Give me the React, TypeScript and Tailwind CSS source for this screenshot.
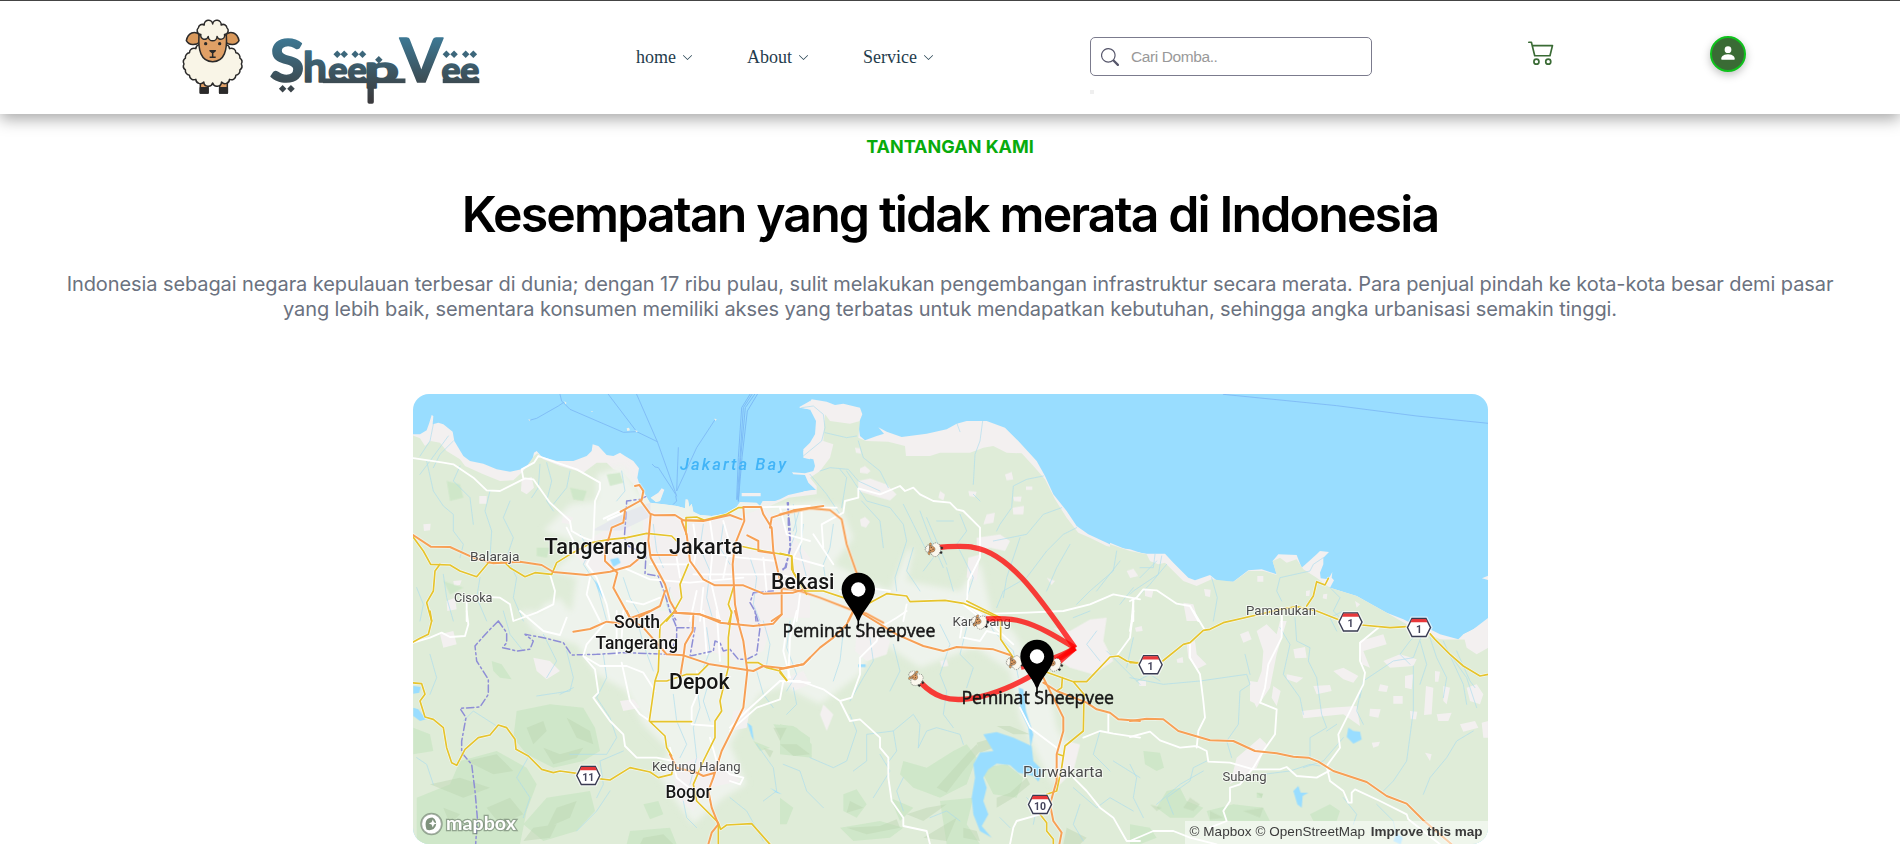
import React from "react";
import { BsSearch, BsCart2, BsPersonFill, BsChevronDown } from "react-icons/bs";

/** Closed outline made of small arcs around an ellipse. */
function cloud(cx: number, cy: number, rx: number, ry: number, n: number): string {
  let d = "";
  for (let i = 0; i <= n; i++) {
    const a = (i / n) * Math.PI * 2 - Math.PI / 2;
    const x = (cx + rx * Math.cos(a)).toFixed(1);
    const y = (cy + ry * Math.sin(a)).toFixed(1);
    const r = ((rx + ry) * 1.9) / n;
    d += i === 0 ? `M${x},${y}` : `A${r.toFixed(1)},${r.toFixed(1)} 0 0 1 ${x},${y}`;
  }
  return d + "Z";
}

const BODY = cloud(158, 192, 86, 57, 20);
const HAIR = cloud(158, 91, 47, 19, 11);

function SheepShape() {
  return (
    <g stroke="#2b2a2a" strokeWidth="4.5" strokeLinejoin="round">
      <path d="M121,240V279H144V240ZM179,240V279H202V240Z" fill="#e0a066" />
      <path d="M121,263H144V279H121ZM179,263H202V279H179Z" fill="#2b2a2a" />
      <path d={BODY} fill="#f9f5e7" />
      <path d="M118,103C104,92 84,97 79,122C88,138 108,136 120,126Z" fill="#d9995c" />
      <path d="M198,103C212,92 232,97 237,122C228,138 208,136 196,126Z" fill="#d9995c" />
      <path d="M117,105C114,150 122,184 158,185C194,184 202,150 199,105Z" fill="#e0a066" />
      <path d={HAIR} fill="#f9f5e7" />
      <g fill="#2b2a2a" stroke="none">
        <circle cx="137" cy="131" r="5" />
        <circle cx="179" cy="131" r="5" />
      </g>
      <path d="M150,152H166L158,159ZM158,158V170M149,172H167" fill="#2b2a2a" />
    </g>
  );
}

/** Small head-on version used for the moving markers. */
function SheepMarker() {
  return (
    <g stroke="#2b2a2a" strokeWidth="5" strokeLinejoin="round">
      <path d="M121,240V279H144V240ZM179,240V279H202V240Z" fill="#2b2a2a" />
      <path d={BODY} fill="#fbf8ee" strokeDasharray="16 10" />
      <path d={HAIR} fill="#fbf8ee" strokeDasharray="16 10" />
      <path d="M118,108C104,97 86,100 80,122C88,136 108,134 120,128Z" fill="#d9995c" strokeWidth="3" />
      <path d="M198,108C212,97 230,100 236,122C228,136 208,134 196,128Z" fill="#d9995c" strokeWidth="3" />
      <path d="M119,112C116,150 126,184 158,185C190,184 200,150 197,112Z" fill="#dd9c62" strokeWidth="4" />
      <circle cx="140" cy="134" r="7" fill="#2b2a2a" stroke="none" />
      <circle cx="178" cy="134" r="7" fill="#2b2a2a" stroke="none" />
      <path d="M148,160H168" fill="none" strokeWidth="9" />
    </g>
  );
}

function Diamond({ x, y }: { x: number; y: number }) {
  return <rect x={x - 8} y={y - 8} width="16" height="16" transform={`rotate(45 ${x} ${y})`} />;
}

function Wordmark() {
  return (
    <svg viewBox="322 90 646 230" className="h-[77px] w-[215px] shrink-0" aria-label="SheepVee">
      <defs>
        <linearGradient id="ink" gradientUnits="userSpaceOnUse" x1="0" y1="112" x2="0" y2="300">
          <stop offset="0" stopColor="#3d7894" />
          <stop offset="0.65" stopColor="#3c4f58" />
          <stop offset="1" stopColor="#3b3b3e" />
        </linearGradient>
      </defs>
      <g fill="url(#ink)" stroke="url(#ink)" strokeLinejoin="round" fontFamily="Lato, 'Liberation Sans', sans-serif" fontWeight="700">
        <text y="246" strokeWidth="5">
          <tspan x="330" fontSize="180" textLength="104" lengthAdjust="spacingAndGlyphs">S</tspan>
          <tspan x="430" fontSize="128" textLength="72" lengthAdjust="spacingAndGlyphs">h</tspan>
          <tspan x="506" fontSize="104" textLength="116" lengthAdjust="spacingAndGlyphs">ee</tspan>
          <tspan x="614" fontSize="106" textLength="104" lengthAdjust="spacingAndGlyphs">p</tspan>
          <tspan x="722" fontSize="184" textLength="128" lengthAdjust="spacingAndGlyphs">V</tspan>
          <tspan x="846" fontSize="104" textLength="114" lengthAdjust="spacingAndGlyphs">ee</tspan>
        </text>
      </g>
      <g fill="url(#ink)">
        <rect x="490" y="235" width="248" height="14" />
        <rect x="850" y="235" width="110" height="14" />
        <rect x="624" y="236" width="19" height="75" rx="5" />
        {[533, 554, 587, 609, 861, 884, 919, 942].map((x) => (
          <Diamond key={x} x={x} y={162} />
        ))}
        <Diamond x={658} y={179} />
        <Diamond x={369} y={266} />
        <Diamond x={394} y={266} />
      </g>
    </svg>
  );
}

/** Map tiles: every tile uses its own thirds-of-a-pixel coordinates. */
type TileKey = "A" | "B" | "C" | "D" | "E" | "F";
type Tiles = Partial<Record<TileKey, string>>;
const ORIGIN: Record<TileKey, [number, number]> = {
  A: [410, 390], B: [410, 610], C: [780, 390], D: [780, 610], E: [1130, 390], F: [1130, 610],
};

function Layer({ tiles, ...rest }: { tiles: Tiles } & React.SVGProps<SVGGElement>) {
  return (
    <g strokeLinejoin="round" strokeLinecap="round" {...rest}>
      {(Object.keys(tiles) as TileKey[]).map((k) => (
        <path key={k} d={tiles[k]} transform={`translate(${ORIGIN[k][0]} ${ORIGIN[k][1]}) scale(0.33333)`} />
      ))}
    </g>
  );
}

const COAST: Tiles = {
  A: "M0,130L30,130L50,118L58,95L65,72L70,75L68,100L85,95L100,100L128,122L133,150L160,195L180,210L220,218L260,235L300,242L335,235L365,215L372,185L380,180L395,197L440,210L490,210L530,195L545,180L548,160L565,165L590,192L610,195L630,185L645,195L670,210L687,232L682,260L690,285L705,310L720,335L760,340L800,345L825,352L827,325L834,326L838,348L845,338L850,362L870,372L905,375L945,368L980,348L990,333L1040,335L1050,345L1058,330L1100,330L1150,315L1185,300L1240,297V760H0ZM722,320L745,305L755,292L763,296L750,330L738,333ZM995,306H1052V316H995ZM1200,30L1168,48L1200,56ZM1200,165L1180,180V200L1200,205Z",
  C: "M-30,335L0,325L25,312L55,305L95,297L108,297L85,275L75,252L40,250L36,244L75,247L100,240L105,225L100,205L72,200L70,175L90,155L105,130L108,90L90,55L57,50L85,38L95,25L140,32L165,42L190,38L240,50L247,70L235,100L240,135L255,148L290,135L312,128L295,109L320,122L365,138L440,128L500,115L530,98L560,90L620,90L675,110L715,150L770,210L795,255L820,310L860,360L890,405L925,430L980,455L1010,470L1050,475L1090,488V760H-30Z",
  E: "M-60,455L0,480L50,488L105,488L130,515L175,560L195,568L240,552L265,572L310,572L355,538L395,535L440,550L428,510L445,490L500,492L515,530L560,490L570,480L597,483L580,500L580,520L570,545L572,562L595,565L607,543L605,560L612,568L600,590L680,615L770,665L820,685L860,705L900,715L930,730L985,745L1000,730L1030,715L1075,680L1110,680V780H-60ZM1056,562L1075,554V567Z",
};

const GREEN: Tiles = {
  A: "M0,130L30,142L45,165L62,150L90,155L110,180L150,205L165,225L220,250L270,270L310,268L340,240L372,195L382,187L400,205L450,225L520,245L560,215L590,215L610,235L640,245L680,290L700,340L760,360L820,400L1000,400L1100,340L1240,310V780H0Z",
  C: "M-30,345L25,320L110,310L110,285L90,260L120,240L150,200L160,160L130,150L135,70L150,90L210,98L240,90L235,140L258,150L325,152L375,165L378,195H450L480,185L570,185L610,170L640,165L680,185L725,187L765,230L795,265L825,325L860,380L895,425L930,440L980,465L1090,492V780H-30Z",
  E: "M-60,460L0,480L50,490L60,510L105,515L160,570L200,585L245,565L310,572L355,540L400,540L440,552L428,510L450,500L470,515L500,505L520,535L560,560L600,590L680,615L770,665L830,700L930,745L985,755L1040,740L1110,690V780H-60Z",
};

const URBAN: Tiles = {
  A: "M560,250L640,225L690,310L1100,345L1240,330V690H600L480,690L500,560L430,540L520,460L400,420L480,340L560,330ZM400,640L450,620L500,690H380Z",
  B: "M330,0H1200V200L1050,250L1000,330L960,400L1010,520L940,560L850,640L790,560L740,480L780,420L700,340L650,240L560,190L500,100L380,70Z",
  C: "M0,340L180,345L220,440L160,520L330,600L380,480L400,470L380,570L540,600L600,510L640,690H0Z",
  D: "M0,0H600L640,60L580,110L420,170L300,90L240,190L120,280L0,220ZM600,0L700,60L770,190L810,240L830,350L870,420L820,520L790,470L720,320L690,180L560,90Z",
};

const CORE: Tiles = {
  A: "M700,350L830,390L980,380L1060,350L1120,400L1200,500V680H820L760,560L700,480ZM480,480L580,420L660,400L690,520L560,550ZM335,265L365,258L372,290L350,310L333,300ZM208,315H230V338H208ZM40,400L62,398L60,418L42,420ZM110,630L135,620L140,655L112,660ZM460,370L490,380L480,400L455,395ZM130,570L155,568L150,582L132,585Z",
  B: "M700,0H1100L1060,120L980,150L900,120L760,140ZM90,70L130,60L140,100L100,110ZM370,140L420,150L450,180L410,205L380,180ZM630,270L670,265L690,290L640,300ZM790,470L860,440L950,470L990,510L900,530L850,600L800,560ZM970,300L1020,290L1010,350L960,360Z",
  C: "M240,232L255,225L272,240L262,248L240,245ZM235,270L270,262L320,280L350,310L330,328L300,320L235,300ZM225,170L240,172L243,188L228,185ZM240,385L255,378L270,392L258,410L243,405ZM565,300L590,302L585,318L568,315ZM675,250L695,243L700,265L680,268ZM738,286H757V297H738ZM700,318L725,316L722,332L702,330ZM698,350L732,345L730,370H700ZM620,370L645,365L640,395L610,400ZM590,440L660,430L690,450L675,480L630,470L590,480ZM565,500L600,490L590,570L560,560ZM1040,540L1060,533L1075,555L1050,560ZM800,560L825,570L815,582ZM480,300L495,310L490,328L475,320Z",
  D: "M230,60L280,50L330,90L320,130L260,150L225,120ZM820,50L870,60L930,25L980,20L970,90L1000,150L940,190L870,170L840,150L890,110ZM860,390L900,400L880,480L840,520L825,480ZM20,200L70,180L90,220L40,240ZM130,280L160,310L140,360L120,310ZM480,150L500,145L505,165L485,168Z",
  E: "M0,540L20,555L0,560ZM45,592L70,600L65,620L45,615ZM222,594L242,596L240,618L226,615ZM382,555H400V572H382ZM160,635L190,640L205,690H170ZM528,600L540,598L538,615H528ZM580,610L592,608L590,625L578,622ZM675,630L690,640L680,650ZM60,510L90,488L105,515L85,520Z",
  F: "M170,100L195,90L200,130L230,160L200,175L175,140ZM380,60L410,40L440,70L450,30L470,30L440,130L420,230L380,290L365,260L395,180L400,120ZM430,225L452,240L440,285L425,260ZM470,190L520,200L500,215L470,205ZM550,225L600,222L605,240L560,250ZM490,115L525,108L530,140L495,142ZM515,300L600,290L680,285L690,345L640,310L520,322ZM610,180L640,170L685,195L670,215L640,205ZM690,90L760,70L770,100L700,120L720,170L695,160ZM760,150L810,130L860,145L850,165L780,170ZM750,220L775,225L770,243L745,240ZM790,255H818V278H790ZM825,195L850,190L845,235L825,230ZM888,225L910,230L905,310L882,312ZM840,300L862,302L858,325H842ZM915,180L930,182L925,212H915ZM720,293L752,295L745,320L718,315ZM920,310L965,305L955,330L925,330ZM990,340L1035,330L1045,350L1000,362ZM725,395L750,392L745,405L730,410ZM885,425L905,430L900,450ZM1010,230L1040,220L1060,250L1050,280L1020,270ZM1000,70L1075,30V110L1040,130L1010,110ZM140,145L158,138L160,155L142,155ZM25,210H48V225H28ZM15,50L35,45L38,60L18,62ZM330,70L355,60L365,85L340,95ZM320,440L390,380L410,400L380,470L300,520ZM360,210L395,215L380,280L360,270ZM940,225L960,230L950,280L940,270ZM1055,335L1075,330V380L1060,380Z",
};

const WOODS: Tiles = {
  A: "M110,270L150,280L160,320L120,330ZM590,250L630,245L640,275L600,285ZM480,290L530,300L520,330L490,325ZM380,470L420,470L410,500L380,495ZM100,570L160,590L120,610Z",
  B: "M245,150L275,160L305,205L270,200L250,180ZM10,350L60,370L70,420L10,430ZM320,300L420,280L520,290L555,350L570,420L520,450L430,470L350,430L310,380ZM150,450L260,420L350,470L380,520L350,600L330,700H20V560L120,520ZM410,560L540,540L555,600L500,660L400,690L340,640ZM700,580L745,570L760,610L720,625ZM1090,340L1150,345L1200,380V420L1130,410ZM1030,390L1080,410L1050,420ZM660,660L780,650L800,700H650Z",
  D: "M0,340L50,350L95,400V440L0,430ZM370,450L440,470L520,420L560,400L590,440L560,520L480,560L400,530L360,490ZM190,550L230,535L260,580L230,620L190,600ZM600,470L680,460L730,500L710,560L640,550L620,510ZM330,560L400,590L360,630ZM480,570L580,560L560,640L600,700H500ZM0,560L40,590L20,640L0,640ZM180,650L300,630L370,650L330,680L220,690Z",
  F: "M40,420L90,425L102,470L80,480L45,460ZM110,540L150,530L170,570L220,590L190,620H120L80,590ZM230,600L310,580L400,590L420,630H240ZM540,610L600,580L630,600L620,630H550ZM380,545L400,548L395,562L380,560ZM0,640L60,650L80,680L30,700H0Z",
};

const RELIEF: Tiles = {
  B: "M350,350L400,330L410,360L370,400ZM470,320L540,360L550,400L500,380ZM400,410L450,430L520,410L500,440L430,460ZM170,450L260,430L310,480L250,490ZM60,520L150,500L240,530L160,560ZM230,590L300,560L340,610L270,640ZM440,590L500,570L480,620L410,650ZM370,650L440,640L420,680L340,690ZM700,680L760,670L790,700H690ZM100,590L150,610L120,640ZM1090,350L1130,350L1110,390ZM1060,410L1090,420L1080,440Z",
  D: "M470,530L560,430L590,400L600,420L550,480L500,545ZM590,395L625,385L640,410L600,425ZM650,345L690,345L750,370L700,370ZM210,570L250,590L200,605ZM650,560L690,545L740,500L750,520L700,560L650,590ZM380,610L440,590L500,580L430,630ZM200,650L300,645L350,625L360,650L260,670ZM430,680L530,620L500,690ZM0,400L50,400L90,430L40,435ZM860,650L920,680L900,700H850ZM550,650L590,660L600,690L550,680Z",
  F: "M180,560L210,580L190,600L160,590ZM340,600L400,590L390,620ZM380,545L398,548L395,560ZM60,580L95,590L80,600ZM240,600L280,620L240,625Z",
};

const WATER: Tiles = {
  A: "M600,505L625,500L632,515L610,528ZM553,565L570,585L580,625L562,590Z",
  B: "M10,225L32,228L28,245L10,248ZM10,290L25,295L48,325L30,330L10,315ZM1012,335L1025,345L1032,390L1024,375ZM1080,530L1115,550L1100,545Z",
  D: "M610,370L650,363L700,380L755,405L760,450L790,480L775,512L760,495L715,485L690,462L650,458L625,475L610,500L620,530L610,570L625,610L605,645L635,680L600,660L580,610L575,560L585,500L580,460L600,425L640,420ZM716,230L730,235L738,300L760,370L752,410L745,350L722,300ZM235,160H257V168H235Z",
  F: "M655,350L670,360L690,362L695,385L670,398L650,378ZM490,540L505,525L512,545L535,545L518,555L515,590L502,580ZM790,690L800,665L818,680L812,700Z",
};

const RIVERS: Tiles = {
  A: "M70,100L60,150L30,195M115,135L60,210L30,250M130,150L90,190L70,230M50,210L70,300L100,345L130,370L130,420L160,460L150,500M150,225L130,270L180,320L190,400M240,300L225,360L245,420L240,500M410,215L425,270L410,330L430,360M480,240L470,290L430,340M390,220L385,290L365,320M635,240L645,300L620,330M300,330L280,380L310,440L290,500L320,560L310,620L340,690M510,430L540,480L520,520L560,580L590,690M730,400L740,480L760,530M880,400L870,470L900,540L890,620L910,690M940,400L930,470L960,520M1020,500L1040,560L1030,640L1050,690M1150,340L1160,420L1140,470M100,550L110,620L130,690M210,560L200,620L230,690M640,560L660,620L700,690M780,590L770,640L790,690M20,590L40,640L30,690M1180,400L1170,480L1190,560",
  B: "M280,0L300,70L340,120M400,70L440,150L410,200M470,120L490,200L480,240L380,255M490,230L450,250M60,130L80,200L60,250M160,330L190,300L260,345M360,430L320,500L360,560L340,620M580,130L590,200L560,260L600,320L620,380L590,430L480,430M640,420L570,450L580,520L560,560M790,250L800,330L830,400L810,440M860,220L870,290L850,350L860,440L840,520M1040,180L1060,250L1090,290M1040,400L1090,470L1100,540L1060,570M820,570L830,620L860,650M900,200L880,270L900,330M1150,230L1160,280L1130,310M20,440L50,460L70,520M600,540L560,600L500,660M960,560L1010,600L1060,690M680,20L700,100L730,180M890,50L900,120L880,170M1060,30L1080,100L1070,160",
  C: "M65,50L100,45L130,70L135,110L125,150L70,195M135,125L200,140L230,135M235,150L250,200L300,240L325,290M120,240L150,230L205,235L235,270L300,300M180,235L200,260L185,350M200,240L260,330L330,350L370,400L380,450L345,560L350,600M245,330L300,390L310,470M370,340L400,400L440,480M440,380L470,450L500,520M420,360L450,440L490,530M470,390H520M530,95L540,122M608,90L600,150L585,190L580,280M580,310L600,330M790,255L740,265L700,285L695,350L660,400L650,420M845,350L790,370L740,430L640,450M890,410L850,430L800,480L740,560L670,600L650,650M870,460L830,530L800,600M1010,480L1000,540L930,600L890,640M500,530L520,600M460,500L430,540M160,400L150,470L130,520L140,590M540,370L560,420L530,460L580,560L560,620M400,470L380,540L420,600M60,350L40,420M720,440L680,560L670,620M1060,590L1020,640M90,250L140,310L180,370M1020,510L950,600",
  D: "M30,30L20,110L50,190L20,240M190,60L180,150L160,210M270,80L280,150L250,200L210,270M340,100L360,180L330,240M480,40L510,100L480,190L500,240M560,50L540,130L580,170L560,230M610,0L640,60L700,120L715,200M415,410L420,340L400,310L340,360L260,370L260,450L220,480M415,410L440,360L470,350L540,370L550,400M500,240L490,310L520,350M340,360L350,420L320,460M10,460L60,480L80,540L130,590M90,440L160,470L200,450L230,360L210,310M280,560L330,480L300,430M370,600L350,540L370,500M950,60L920,100L960,150M980,120L1080,220M740,560L770,590L760,640M960,360L940,430L990,480M1000,450L1080,500M880,530L950,590L990,560L1060,600M450,620L500,600L540,630M900,580L880,640L910,690M880,20L930,0M1060,80L1040,170M660,620L690,650",
  E: "M580,500L550,520L540,540L450,560L440,600L455,630M245,560L262,620L250,690M75,490L70,530L30,530M95,495L85,550L10,600L0,610M110,520L60,580L20,620M80,510L30,560M600,590L630,620L610,660L640,690",
  F: "M0,200L100,220L210,210L350,190L360,220L330,240L325,340L290,390L305,440M345,130L360,190M495,20L500,90L540,110L535,150L560,200L575,310L590,350L540,380L540,440M450,50L480,100L460,190L510,260L520,310M690,260L700,210L790,150L850,140L880,60M700,340L680,300L690,250M850,165L850,300L830,450L790,510L760,540M1030,360L980,390L950,440L900,500L880,550M840,160L810,130L840,90L870,60M900,80L920,140L950,200L940,260M940,90L1000,220L1010,280M960,130L1010,200L1040,290M870,90L890,160L870,220M230,450L190,470L180,510L110,560L130,610M0,460L20,500L10,560L40,620M220,480L150,520L80,580M400,490L480,480L540,460L570,465M590,360L620,340M640,380L580,450L520,470M640,560L680,610L670,640M740,580L790,630L800,680M20,210L60,190L90,210M980,120L1020,210L1035,230M640,0L600,20L620,60",
};

const FERRY: Tiles = {
  A: "M450,10L455,30L480,55L640,124L680,122M460,35L445,45L380,82L358,88M595,10L680,122L742,152L800,315M680,10L742,152M915,86L860,170L800,300L805,170M797,310L745,230L735,228L727,220M797,315L800,330L790,340",
  E: "M280,10L620,44L860,75L1075,97",
};
const LANES: Tiles = { A: "M1020,10L995,50L985,200L980,325M1026,10L1000,50L990,200L982,325M1034,10L1006,50L992,200L985,330M1042,10L1012,60L996,200L985,330" };

const ISLETS: Tiles = { A: "M463,30L470,36L466,40ZM543,60L549,61L546,64ZM650,112L657,110L660,118L652,120ZM674,118L684,120L680,124ZM355,85L362,86L358,90ZM912,83L920,84L917,90Z" };

const WHITE: Tiles = {
  A: "M0,200L100,215L130,220L190,260L230,298L270,300L345,262L370,265L420,335L480,390L485,420L520,440L550,450M340,262L335,235L372,215L385,195L440,215L500,235L570,275L570,295L555,330L550,445M545,490L530,520L560,560L590,640L600,690M420,550L435,600L430,640L380,665L310,690L300,640L270,620L170,615L170,690M540,560L530,610L570,690M640,530L720,565L840,575L1000,560M720,520H840M800,500L810,560M850,400L860,470L850,530M900,390L910,460L900,560L930,690M850,550H1100L1200,570M860,480L990,500L1100,510M940,390L960,460L940,560M1000,350L1200,345M1060,500L1070,600M860,600L840,690M1110,350L1130,430L1200,450M470,410L490,450M650,630L700,640L750,620M880,590L870,690",
  B: "M0,98L60,80L95,65L120,78L165,75L175,40L170,0M330,0L400,60L450,72L470,20M590,30L530,100L520,135L555,175L565,245L550,260L600,330L640,370L645,405L680,440L740,440L790,450M520,135L570,165L650,165L700,185L735,240M635,155L660,270L690,310L720,330M1200,215L1120,210L1110,265L1040,290L960,360M1110,210L1010,300L960,350M860,180L870,230L845,290L845,340L910,345M780,410L800,500L850,540M900,380L920,450L960,490L1000,500L990,520L960,510M640,0L635,80M880,0L890,130M920,0L930,150M620,0V130M1130,50L1120,120L1140,200",
  C: "M130,470L125,400L190,365L195,330L235,320L235,292L300,310L360,285L375,300L400,290L420,310L460,330L510,335L530,355L550,360L600,410L600,500L565,570L560,640L600,670M640,668L740,665L850,660L930,640L1000,610L1080,625M0,350L170,350M65,360V450L40,500L130,525M100,430L160,520M180,600L260,590L330,600M370,690L380,640M1060,625L1060,690M60,610L50,690M550,640L600,680",
  D: "M0,210L60,210L130,235L180,270L210,330L240,325L300,380L300,410L325,440L325,500L335,570L370,620L370,645L440,660L450,700M180,270L215,260L240,190L240,140L290,90L300,50L350,20L380,0M50,0L30,80L25,200M550,80L600,90L620,60L660,70M720,290L750,350L830,410M910,380L960,360L1000,368L1080,380M985,310V365M1060,0L1050,80L1010,135M880,500L920,540L960,590L1000,620L1040,690L1080,690M690,700L700,650L710,630L780,610M590,0L700,100M550,20L540,80",
  E: "M0,630L20,620L40,595L80,598L140,638L180,645L205,690M10,630L5,690M455,650V690",
  F: "M10,0L0,60M190,0L225,58M180,95L180,140L210,190L220,270L225,320L205,360L200,410M455,0L455,80L415,160L405,230L390,275L440,295L435,370L400,420L370,470L330,520L300,530L300,570L280,600L290,630L240,650M745,50L690,95L690,150L705,185L700,220L670,280L625,370L630,410L590,465L600,510L640,540L655,575L665,575L665,545L675,535L750,570L830,610L835,625L930,700M0,378L60,362L90,388L150,410L200,405L230,420L235,452L300,455L370,475L450,475L470,468L500,495L560,500L600,478M0,690L70,660L130,660L180,680L260,700",
};

const YELLOW: Tiles = {
  A: "M0,425L40,480L62,520L120,522L150,540L200,557L235,515L285,515L300,530L345,557L375,545L425,550L440,515L480,490L545,455L600,445L650,440L710,427L785,435L800,450M90,520L75,540L70,600L50,635L65,690M820,388L880,388L950,370L985,350H1000M828,430V380L860,378L880,386M835,520L810,580L815,620L790,665L770,690M990,465L1060,480L1145,495L1150,545L1190,610M970,590L955,640L965,665L955,700",
  B: "M60,0L65,30L55,70L30,82L0,98M0,215L35,218L45,250L30,270L45,318L70,325L100,350L110,410L125,455L140,463L165,415L205,380L240,372L265,342L290,350L315,385L318,415L355,435L395,475L430,485L450,480L500,487M565,503L600,507L660,470L720,483L745,500L785,490L790,460M790,5L750,45L745,180L735,210L718,330L765,375L770,410L785,435M720,332H845M735,210H770L830,190L865,190L895,160M965,0L955,80L955,170L930,270L935,300L915,330L915,380L880,450L850,520L860,570L925,635L932,655L950,642L1025,638L1080,700M925,640V700M1010,155L1045,155L1070,170L1110,180L1130,208",
  C: "M0,487L35,495L35,535L75,600L130,600L190,620L270,635L320,608L380,615L390,632L495,628L550,637L640,675L665,695",
  D: "M560,-30L640,10L662,20L662,85L700,140L790,180L880,212L920,212L990,138L1015,135L1040,150L1080,158M880,212L912,250L910,360L855,405L845,470L830,540L800,550M780,610L800,635L800,660L820,685V700M847,200L845,230L830,240M0,185L20,208M835,430L850,435L845,470",
  E: "M530,645L550,615L560,572L585,582L595,562",
  F: "M0,155H30M98,150L160,100L180,95L220,58L240,55L280,35L380,12L450,-5L500,-13L560,0L630,28M695,42L780,50L830,47M900,68L915,85L960,130L1000,165L1050,195L1075,190",
};

const ORANGE: Tiles = {
  A: "M0,426L62,467L120,468L190,500L250,517L330,512L395,522L430,543L530,552L600,542L660,525L690,500M690,327L720,368L735,373L795,372L820,388L880,390L960,372L995,385M675,285L688,282L700,300L695,327L632,362M645,360L640,395L605,410L597,440L585,470V510L622,545L610,590L665,690M722,372L715,450L722,500L765,580L780,630L800,665L870,670L930,690M720,492H800M815,390L830,430L840,510L880,565L915,583L1000,583L1060,608L1150,605L1200,590M1000,348H1053L1060,370L1085,410L1090,480L1115,590V670L1085,690M1000,348L1003,390L975,460L968,520L975,640L985,690M1080,410L1085,380L1150,358L1240,345M1012,433L1045,450V480L1090,487M665,690L750,645L765,600",
  B: "M490,62L540,54L590,32L640,38M650,0L662,25L700,50L770,130L820,133L900,160L1030,180L1060,165L1120,172L1180,160L1200,140M790,5L870,10L930,35L1030,45L1090,38L1115,10M665,20L720,0M850,15L848,60L825,100L820,140L810,200M975,0L1000,90L1012,180L1000,290L935,420L910,500L895,540L905,590L925,640L905,665L895,700M780,430L800,470L860,485L880,495L915,485",
  C: "M0,370L90,352L150,357L185,385L200,460L235,560L245,610M-20,590L50,597L120,620L210,655L260,668L310,695M205,690L220,660M250,580L245,640",
  D: "M235,0L350,70L430,105L490,120L530,108L640,115L690,132M0,175L70,160L120,110L160,80L200,40L220,0M785,190L810,240L850,320L850,360L830,430L830,510L810,580L820,630L845,665L838,700M790,215L830,240L920,275L950,295L990,305L1015,325L1080,330",
  F: "M0,330L50,323L100,325L145,360L240,388L310,390L375,420L440,427L490,437L535,440L565,452L610,480L710,513L770,555L830,578L880,628L965,700",
};

const BORDER: Tiles = {
  A: "M707,317L690,325L650,330L648,370L643,440L655,465L708,490L705,548L745,555L765,610L780,660L800,690M1135,335V400L1142,470L1125,530L1115,540M1090,600L1030,605L1020,635L1035,660L1038,690",
  B: "M265,30L235,60L195,105L200,150L235,205L235,250L210,288L150,292L168,320L155,390V425L185,460L195,540L202,620L197,700M265,30L290,65V95L278,110L320,120L360,115L370,90L345,70L400,80L460,95L485,132L560,130L640,125L780,130L800,80V50L780,0M800,50H855L840,135L910,120L915,90L930,95L940,120L960,115L985,145L1010,145L1040,130L1050,50L1035,0",
  C: "M22,335L30,410L30,470L18,530L5,535",
};

const D_SHIELD = "M-11.5,0L-7,-9H7L11.5,0L7,9H-7Z";
function Shield({ x, y, n }: { x: number; y: number; n: string }) {
  return (
    <g transform={`translate(${x} ${y})`}>
      <path d={D_SHIELD} fill="#fff" stroke="#fff" strokeWidth="4" opacity=".6" />
      <path d={D_SHIELD} fill="#fff" stroke="#393b52" strokeWidth="1.4" />
      <path d="M-7,-8.6H7L8.5,-5.2H-8.5Z" fill="#e8383b" />
      <text y="5" textAnchor="middle" fontSize="10.5" fontWeight="700" fill="#45455c" fontFamily="Roboto, sans-serif">{n}</text>
    </g>
  );
}

interface LabelProps { x: number; y: number; w: number; size: number; kind?: "city" | "town" | "pin"; text: string }
function Label({ x, y, w, size, kind = "town", text }: LabelProps) {
  const fill = kind === "town" ? "#4b4b4b" : "#161616";
  return (
    <text
      x={x} y={y} textLength={w} lengthAdjust="spacingAndGlyphs" fontSize={size} fill={fill}
      fontFamily={kind === "pin" ? "'Open Sans', 'Noto Sans', sans-serif" : "Roboto, sans-serif"}
      fontWeight={kind === "city" ? 500 : 400}
      stroke={kind === "pin" ? fill : "#fff"} strokeOpacity={kind === "pin" ? 1 : 0.65} strokeWidth={kind === "pin" ? 0.5 : 2} paintOrder="stroke"
    >
      {text}
    </text>
  );
}

const LABELS: LabelProps[] = [
  { x: 544.5, y: 553, w: 103, size: 22, kind: "city", text: "Tangerang" },
  { x: 669, y: 553, w: 74, size: 22, kind: "city", text: "Jakarta" },
  { x: 771, y: 587.5, w: 63.5, size: 22, kind: "city", text: "Bekasi" },
  { x: 614, y: 627, w: 46, size: 17.5, kind: "city", text: "South" },
  { x: 595.5, y: 648, w: 82.5, size: 17.5, kind: "city", text: "Tangerang" },
  { x: 669, y: 688, w: 60.5, size: 22, kind: "city", text: "Depok" },
  { x: 665.5, y: 797, w: 46, size: 17.5, kind: "city", text: "Bogor" },
  { x: 470, y: 559.5, w: 49.5, size: 13.5, text: "Balaraja" },
  { x: 454, y: 601, w: 38.5, size: 13.5, text: "Cisoka" },
  { x: 652, y: 770, w: 88.5, size: 13.5, text: "Kedung Halang" },
  { x: 952.5, y: 624.5, w: 58.5, size: 13.5, text: "Karawang" },
  { x: 1023, y: 775.5, w: 80, size: 15, text: "Purwakarta" },
  { x: 1246, y: 614, w: 70, size: 13.5, text: "Pamanukan" },
  { x: 1222.5, y: 780, w: 44, size: 13.5, text: "Subang" },
];

const ROUTES = [
  "M938,546.5C950,545 968,545 973,546.3C1012,552 1045,605 1075,647",
  "M986,618C1002,617 1014,618 1022,620.5C1042,626 1060,638 1075,647",
  "M921,682C936,697 949,699 961,698.5C1002,696 1043,669 1075,647",
  "M1021,666C1040,663 1062,655 1075,647",
  "M1059,661L1075,647",
];

const SHEEP = [
  { x: 934, y: 548.5, r: 82 },
  { x: 980, y: 621, r: 70 },
  { x: 916, y: 677.5, r: 40 },
  { x: 1015, y: 661.5, r: 85 },
  { x: 1054, y: 663, r: 60 },
];

function Pin({ x, y }: { x: number; y: number }) {
  return (
    <g transform={`translate(${x} ${y})`}>
      <path d="M-1,31C-5,20-16.7,11-16.7,0A16.7,16.7 0 1 1 16.7,0C16.7,11 5,20 1,31Z" fill="#000" />
      <path d="M-4,20L-.8,31V38H.8V31L4,20Z" fill="#000" />
      <circle r="7.2" fill="#fff" />
    </g>
  );
}

function MapView() {
  return (
    <svg viewBox="413 393 1075 450" className="block h-full w-full">
      <rect x="413" y="393" width="1075" height="450" fill="#99ddff" />
      <Layer tiles={COAST} fill="#f3f0f0" />
      <Layer tiles={GREEN} fill="#dfecd8" />
      <rect x="413" y="638.5" width="1075" height="205" fill="#dfecd8" />
      <defs>
        <filter id="soft" x="-5%" y="-5%" width="110%" height="110%">
          <feGaussianBlur stdDeviation="3" />
        </filter>
      </defs>
      <clipPath id="land">
        <rect x="413" y="638" width="1075" height="205" />
        {(["A", "C", "E"] as TileKey[]).map((k) => (
          <path key={k} d={COAST[k]} transform={`translate(${ORIGIN[k][0]} ${ORIGIN[k][1]}) scale(0.33333)`} />
        ))}
      </clipPath>
      <g clipPath="url(#land)">
        <Layer tiles={URBAN} fill="#eef3ec" filter="url(#soft)" />
        <Layer tiles={CORE} fill="#f3f0f0" />
      </g>
      <Layer tiles={WOODS} fill="#cae6c4" opacity=".75" />
      <Layer tiles={RELIEF} fill="#bcd5b1" opacity=".45" />
      <Layer tiles={RIVERS} fill="none" stroke="#a9dcef" strokeWidth="2.2" opacity=".85" />
      <Layer tiles={WATER} fill="#99ddff" />
      <Layer tiles={FERRY} fill="none" stroke="#7db8f5" strokeWidth="2.6" />
      <Layer tiles={LANES} fill="none" stroke="#74b2f3" strokeWidth="3" opacity=".8" />
      <Layer tiles={ISLETS} fill="#eef0ea" />
      <path d="M560,527L594,509L617,500V514L588,528H560Z" transform="translate(34 2) scale(.999)" fill="#e4e6ee" opacity=".8" />
      <path d="M603,518L620,510M607,519L623,512" stroke="#fff" strokeWidth="2" />
      <Layer tiles={BORDER} fill="none" stroke="#8e8ed6" strokeWidth="4.5" strokeDasharray="22 9 6 9" />
      <Layer tiles={WHITE} fill="none" stroke="#fff" strokeWidth="5.5" />
      <Layer tiles={YELLOW} fill="none" stroke="#fff" strokeWidth="9" opacity=".6" />
      <Layer tiles={ORANGE} fill="none" stroke="#fff" strokeWidth="10" opacity=".6" />
      <Layer tiles={YELLOW} fill="none" stroke="#e6c42c" strokeWidth="5" />
      <Layer tiles={ORANGE} fill="none" stroke="#f7a055" strokeWidth="6" />

      <text x="680" y="468.5" textLength="106" fontSize="16.5" fontStyle="italic" fontWeight="500" fill="#42b4f7" fontFamily="Roboto, sans-serif">
        Jakarta Bay
      </text>
      <Shield x={588.3} y={774.5} n="11" />
      <Shield x={1040} y={803.5} n="10" />
      <Shield x={1150.6} y={663.8} n="1" />
      <Shield x={1350.5} y={621} n="1" />
      <Shield x={1419} y={626.5} n="1" />
      {LABELS.map((l, i) => (
        <Label key={i} {...l} />
      ))}

      <g fill="none" stroke="#f00" strokeOpacity=".75" strokeWidth="5.4" strokeLinejoin="round">
        {ROUTES.map((d) => (
          <path key={d} d={d} />
        ))}
      </g>
      {SHEEP.map((s) => (
        <g key={s.x} transform={`translate(${s.x} ${s.y}) rotate(${-s.r}) scale(.079) translate(-158 -172)`}>
          <SheepMarker />
        </g>
      ))}
      <Label x={782.5} y={636} w={153} size={18} kind="pin" text="Peminat Sheepvee" />
      <Label x={961.5} y={703} w={152.5} size={18} kind="pin" text="Peminat Sheepvee" />
      <Pin x={858.3} y={588.5} />
      <Pin x={1037} y={655.5} />

      <g stroke="#5c6b5c" strokeOpacity=".55">
        <circle cx="431.5" cy="823" r="10.3" fill="#fff" strokeWidth="1.8" />
        <path d="M426.5,828.5C424,820 427,816.5 432.5,816.5A5.7,5.7 0 1 1 426.5,828.5Z" fill="#7f927d" stroke="none" />
        <path d="M432.8,818.5L434,821.2L436.8,822.4L434,823.6L432.8,826.4L431.6,823.6L428.8,822.4L431.6,821.2Z" fill="#fff" stroke="none" />
        <text x="446" y="828.5" textLength="70" lengthAdjust="spacingAndGlyphs" fontSize="19" fontWeight="700" fill="#fff" strokeWidth="2.5" paintOrder="stroke" fontFamily="Lato, sans-serif">
          mapbox
        </text>
      </g>
    </svg>
  );
}

const NAV = [
  { label: "home", box: "w-[111px]" },
  { label: "About", box: "w-[116px]" },
  { label: "Service", box: "w-[227px]" },
];

function Header() {
  return (
    <header className="relative flex h-[114px] items-start border-t border-[#444] bg-white pl-[180px] shadow-[0_5px_15px_rgba(0,0,0,0.35)]">
      <svg viewBox="60 57 198 228" className="mt-[18px] h-[76px] w-[66px] shrink-0" aria-hidden="true">
        <SheepShape />
      </svg>
      <div className="ml-[21px] mt-[29px] w-[369px]">
        <Wordmark />
      </div>
      <nav className="mt-[42px] flex font-['Liberation_Serif',serif] text-[18px] leading-[28px] text-[#1f3c4c]">
        {NAV.map((n) => (
          <a key={n.label} className={`flex items-center gap-[6px] ${n.box}`}>
            {n.label}
            <BsChevronDown className="h-[11px] w-[11px]" />
          </a>
        ))}
      </nav>
      <div className="mt-[36px] w-[438px]">
        <div className="flex h-[39px] w-[282px] items-center rounded-[5px] border border-[#7b7b8d] pl-[10px]">
          <BsSearch className="h-[18px] w-[18px] text-[#55556a]" />
          <span className="ml-[12px] font-['Liberation_Sans',sans-serif] text-[15.5px] tracking-[-0.4px] text-[#999]">Cari Domba..</span>
        </div>
        <div className="mt-[14px] h-1 w-1 bg-[#efefef]" />
      </div>
      <BsCart2 className="mt-[37px] h-[27px] w-[27px] shrink-0 text-[#3a6b35]" />
      <div className="ml-[155px] mt-[35px] flex h-9 w-9 items-center justify-center rounded-full border-2 border-[#0fc21c] bg-[#3a6b35] shadow-[0_3px_8px_rgba(0,0,0,0.25)]">
        <BsPersonFill className="mb-[3px] h-[18px] w-[18px] text-white" />
      </div>
    </header>
  );
}

export default function App() {
  return (
    <div className="flex h-[867px] w-[1900px] flex-col overflow-hidden bg-white font-[Inter,sans-serif]">
      <Header />
      <main className="flex flex-col items-center">
        <p className="mt-[19px] text-[18px] font-bold leading-[28px] text-[#08ab0c]">TANTANGAN KAMI</p>
        <h1 className="mt-[23px] text-[50px] font-semibold leading-[60px] tracking-[-1.87px] text-black">
          Kesempatan yang tidak merata di Indonesia
        </h1>
        <p className="mt-[28px] w-[1800px] text-center text-[20px] leading-[25px] tracking-[-0.09px] text-[#6b7280]">
          Indonesia sebagai negara kepulauan terbesar di dunia; dengan 17 ribu pulau, sulit melakukan pengembangan infrastruktur secara merata. Para penjual pindah ke kota-kota besar demi pasar yang lebih baik, sementara konsumen memiliki akses yang terbatas untuk mendapatkan kebutuhan, sehingga angka urbanisasi semakin tinggi.
        </p>
        <section className="relative mt-[72px] h-[450px] w-[1075px] overflow-hidden rounded-[16px]">
          <MapView />
          <div className="absolute bottom-0 right-0 flex h-[23px] w-[303px] items-center justify-between whitespace-nowrap bg-white/50 pl-[5px] pr-[5px] font-['Liberation_Sans',sans-serif] text-[13.5px] text-[#3b3b3b]">
            <span className="tracking-[0.05px]">© Mapbox © OpenStreetMap</span>
            <span className="font-bold">Improve this map</span>
          </div>
        </section>
      </main>
    </div>
  );
}
